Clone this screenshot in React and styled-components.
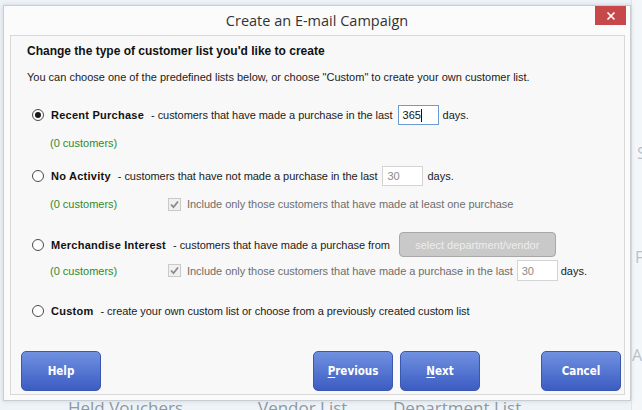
import React from "react";
import styled, { createGlobalStyle, css } from "styled-components";

const GlobalStyle = createGlobalStyle`
  html, body {
    margin: 0;
    padding: 0;
  }
  body {
    font-family: "Liberation Sans", Arial, sans-serif;
    background: #eef3f7;
  }
`;

const S = {
  Desktop: styled.div`
    position: relative;
    width: 642px;
    height: 410px;
    overflow: hidden;
    display: flex;
    background: #eef3f7;
  `,
  Workspace: styled.div`
    flex: 1;
    display: flex;
    flex-direction: column;
    justify-content: flex-end;
  `,
  ShortcutRow: styled.div`
    display: flex;
    align-items: flex-start;
    height: 12px;
    padding-left: 68px;
  `,
  Shortcut: styled.span`
    width: ${(p) => p.$width}px;
    font-family: "Open Sans", sans-serif;
    font-size: 17px;
    line-height: 20px;
    color: #8d99a4;
    white-space: nowrap;
  `,
  SidePanel: styled.div`
    width: 10px;
    display: flex;
    flex-direction: column;
    padding-top: 143px;
    border-left: 1px solid #dfe5ea;
    background: #f4f7f9;
  `,
  SideLetter: styled.span`
    margin-top: ${(p) => p.$gap || 0}px;
    padding-left: ${(p) => p.$indent || 0}px;
    font-family: "Open Sans", sans-serif;
    font-size: 16px;
    line-height: 20px;
    color: #b9c2ca;
    white-space: nowrap;
  `,
  Dialog: styled.div`
    position: absolute;
    left: 3px;
    top: 5px;
    width: 628px;
    height: 396px;
    box-sizing: border-box;
    display: flex;
    flex-direction: column;
    border: 1px solid #c8cdd2;
    background: #fbfbfb;
    box-shadow: 0 0 5px rgba(60, 80, 100, 0.18);
  `,
  TitleBar: styled.div`
    height: 29px;
    display: grid;
    grid-template-columns: 1fr auto 1fr;
    align-items: start;
  `,
  Title: styled.div`
    grid-column: 2;
    font-family: "Open Sans", sans-serif;
    font-size: 14.5px;
    line-height: 29px;
    color: #333;
  `,
  Close: styled.button`
    grid-column: 3;
    justify-self: end;
    width: 31px;
    height: 19px;
    margin-right: 4px;
    padding: 0;
    border: 0;
    display: flex;
    align-items: center;
    justify-content: center;
    background: #c7484a;
  `,
  Panel: styled.div`
    flex: 1;
    margin: 0 5px 5px 6px;
    display: flex;
    flex-direction: column;
    border: 1px solid #d8d8d8;
    background: #f8f8f8;
  `,
  Body: styled.div`
    display: flex;
    flex-direction: column;
    padding: 7px 0 0 16px;
    font-size: 11px;
    color: #1b1b1b;
  `,
  Heading: styled.div`
    font-size: 12px;
    font-weight: bold;
    line-height: 16px;
    color: #111;
  `,
  Intro: styled.div`
    margin-top: 11px;
    line-height: 14px;
  `,
  Row: styled.div`
    display: flex;
    align-items: center;
    height: ${(p) => p.$h}px;
    margin-top: ${(p) => p.$mt}px;
    padding-left: ${(p) => p.$indent || 0}px;
    white-space: nowrap;
  `,
  Radio: styled.span`
    width: 10px;
    height: 10px;
    flex: none;
    border: 1px solid #4a4a4a;
    border-radius: 50%;
    background: #fff;
    display: flex;
    align-items: center;
    justify-content: center;
    ${(p) =>
      p.$checked &&
      css`
        &::after {
          content: "";
          width: 6px;
          height: 6px;
          border-radius: 50%;
          background: #1a1a1a;
        }
      `}
  `,
  OptionName: styled.span`
    margin-left: 7px;
    font-weight: bold;
    letter-spacing: 0.25px;
    color: #111;
  `,
  Hint: styled.span`
    margin-left: 7px;
    letter-spacing: -0.05px;
  `,
  Field: styled.div`
    width: ${(p) => p.$w || 41}px;
    height: ${(p) => p.$h || 20}px;
    box-sizing: border-box;
    margin-left: ${(p) => p.$ml}px;
    padding-left: 4px;
    display: flex;
    align-items: center;
    background: #fff;
    border: 1px solid ${(p) => (p.$active ? "#6d9bd6" : "#d4d4d4")};
    color: ${(p) => (p.$active ? "#111" : "#8a8a8a")};
  `,
  Caret: styled.span`
    width: 1px;
    height: 13px;
    background: #111;
  `,
  Unit: styled.span`
    margin-left: ${(p) => p.$ml || 4}px;
  `,
  Count: styled.span`
    width: 118px;
    color: #2f8a2f;
  `,
  Check: styled.span`
    width: 13px;
    height: 13px;
    box-sizing: border-box;
    flex: none;
    display: flex;
    align-items: center;
    justify-content: center;
    border: 1px solid #c9c9c9;
    background: #f0f0f0;
  `,
  CheckText: styled.span`
    margin-left: 6px;
    letter-spacing: -0.05px;
    color: #6e6e6e;
  `,
  PickButton: styled.button`
    width: 157px;
    height: 25px;
    margin-left: 9px;
    padding: 0;
    font-family: inherit;
    font-size: 11px;
    color: #ededed;
    border: 1px solid #a8a8a8;
    border-radius: 4px;
    background: #c9c9c9;
  `,
  ButtonBar: styled.div`
    margin-top: auto;
    display: flex;
    padding: 0 3px 3px 10px;
  `,
  Button: styled.button`
    width: 80px;
    height: 40px;
    margin-left: ${(p) => (p.$ml === "auto" ? "auto" : `${p.$ml || 0}px`)};
    padding: 0;
    font-family: "DejaVu Sans Condensed", "Liberation Sans", sans-serif;
    font-size: 11.5px;
    font-weight: bold;
    color: #fff;
    border: 1px solid #3a58b0;
    border-radius: 5px;
    background: linear-gradient(#7091e0, #3c5cc3);
    u {
      text-decoration: underline;
      text-underline-offset: 2px;
    }
  `,
};

const CloseIcon = () => (
  <svg width="10" height="10" viewBox="0 0 10 10">
    <path d="M1.5 1.5 L8.5 8.5 M8.5 1.5 L1.5 8.5" stroke="#fff" strokeWidth="1.6" />
  </svg>
);

const Tick = () => (
  <svg width="11" height="11" viewBox="0 0 11 11">
    <path d="M2 5.5 L4.5 8.2 L9 2.5" stroke="#8a8a8a" strokeWidth="1.8" fill="none" />
  </svg>
);

const App = () => (
  <>
    <GlobalStyle />
    <S.Desktop>
      <S.Workspace>
        <S.ShortcutRow>
          <S.Shortcut $width={190}>Held Vouchers</S.Shortcut>
          <S.Shortcut $width={135}>Vendor List</S.Shortcut>
          <S.Shortcut $width={140}>Department List</S.Shortcut>
        </S.ShortcutRow>
      </S.Workspace>
      <S.SidePanel>
        <S.SideLetter $indent={5}>S</S.SideLetter>
        <S.SideLetter $gap={84} $indent={3}>F</S.SideLetter>
        <S.SideLetter $gap={78} $indent={0}>Ac</S.SideLetter>
      </S.SidePanel>

      <S.Dialog>
        <S.TitleBar>
          <S.Title>Create an E-mail Campaign</S.Title>
          <S.Close aria-label="Close">
            <CloseIcon />
          </S.Close>
        </S.TitleBar>
        <S.Panel>
          <S.Body>
            <S.Heading>Change the type of customer list you'd like to create</S.Heading>
            <S.Intro>
              You can choose one of the predefined lists below, or choose "Custom" to create
              your own customer list.
            </S.Intro>

            <S.Row $h={20} $mt={21} $indent={5}>
              <S.Radio $checked />
              <S.OptionName>Recent Purchase</S.OptionName>
              <S.Hint>- customers that have made a purchase in the last</S.Hint>
              <S.Field $active $ml={5}>
                365
                <S.Caret />
              </S.Field>
              <S.Unit>days.</S.Unit>
            </S.Row>
            <S.Row $h={16} $mt={10} $indent={23}>
              <S.Count>(0 customers)</S.Count>
            </S.Row>

            <S.Row $h={20} $mt={15} $indent={5}>
              <S.Radio />
              <S.OptionName>No Activity</S.OptionName>
              <S.Hint>- customers that have not made a purchase in the last</S.Hint>
              <S.Field $ml={5}>30</S.Field>
              <S.Unit>days.</S.Unit>
            </S.Row>
            <S.Row $h={16} $mt={10} $indent={23}>
              <S.Count>(0 customers)</S.Count>
              <S.Check>
                <Tick />
              </S.Check>
              <S.CheckText>Include only those customers that have made at least one purchase</S.CheckText>
            </S.Row>

            <S.Row $h={25} $mt={20} $indent={5}>
              <S.Radio />
              <S.OptionName>Merchandise Interest</S.OptionName>
              <S.Hint>- customers that have made a purchase from</S.Hint>
              <S.PickButton disabled>select department/vendor</S.PickButton>
            </S.Row>
            <S.Row $h={21} $mt={3} $indent={23}>
              <S.Count>(0 customers)</S.Count>
              <S.Check>
                <Tick />
              </S.Check>
              <S.CheckText>
                Include only those customers that have made a purchase in the last
              </S.CheckText>
              <S.Field $ml={4} $h={21}>30</S.Field>
              <S.Unit $ml={3}>days.</S.Unit>
            </S.Row>

            <S.Row $h={16} $mt={22} $indent={5}>
              <S.Radio />
              <S.OptionName>Custom</S.OptionName>
              <S.Hint>- create your own custom list or choose from a previously created custom list</S.Hint>
            </S.Row>
          </S.Body>

          <S.ButtonBar>
            <S.Button>Help</S.Button>
            <S.Button $ml="auto">
              <u>P</u>revious
            </S.Button>
            <S.Button $ml={7}>
              <u>N</u>ext
            </S.Button>
            <S.Button $ml={61}>Cancel</S.Button>
          </S.ButtonBar>
        </S.Panel>
      </S.Dialog>
    </S.Desktop>
  </>
);

export default App;
